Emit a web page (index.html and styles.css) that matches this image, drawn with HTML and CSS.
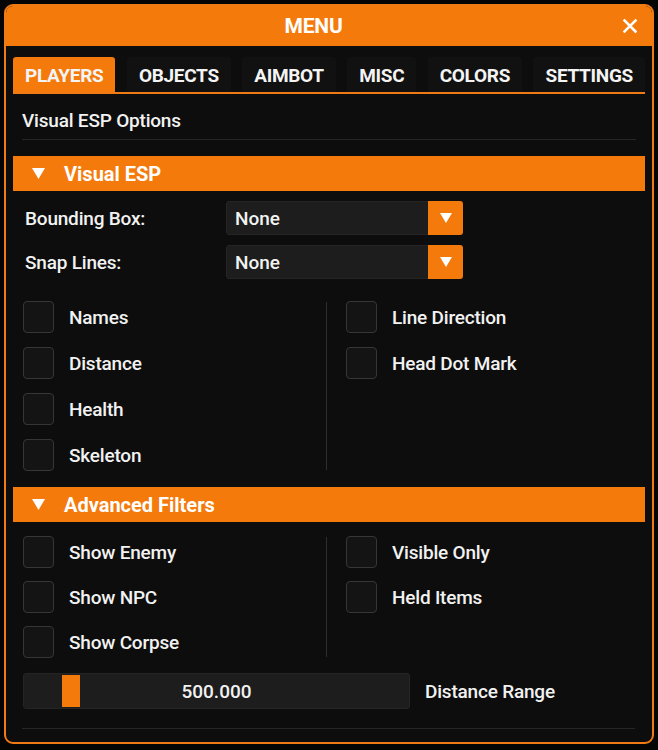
FILE: index.html
```html
<!DOCTYPE html>
<html>
<head>
<meta charset="utf-8">
<link rel="stylesheet" href="styles.css">
</head>
<body>
<div class="window">
  <div class="titlebar">
    <span class="title">MENU</span>
    <span class="close">
      <svg width="16" height="16" viewBox="0 0 16 16"><path d="M2.5 2.5 L13.5 13.5 M13.5 2.5 L2.5 13.5" stroke="#fff" stroke-width="2.5" stroke-linecap="square"/></svg>
    </span>
  </div>
  <div class="body">
    <div class="tabs">
      <div class="tab active">PLAYERS</div>
      <div class="tab">OBJECTS</div>
      <div class="tab">AIMBOT</div>
      <div class="tab">MISC</div>
      <div class="tab">COLORS</div>
      <div class="tab">SETTINGS</div>
    </div>
    <div class="subtitle">Visual ESP Options</div>

    <div class="header header-first">
      <svg class="tri" width="13" height="11" viewBox="0 0 13 11"><polygon points="0,0 13,0 6.5,11" fill="#fff"/></svg>
      <span>Visual ESP</span>
    </div>

    <div class="combo-row combo-first">
      <span class="combo-label">Bounding Box:</span>
      <div class="combo">
        <span class="combo-value">None</span>
        <span class="combo-arrow"><svg width="12" height="10" viewBox="0 0 12 10"><polygon points="0,0 12,0 6,10" fill="#fff"/></svg></span>
      </div>
    </div>
    <div class="combo-row">
      <span class="combo-label">Snap Lines:</span>
      <div class="combo">
        <span class="combo-value">None</span>
        <span class="combo-arrow"><svg width="12" height="10" viewBox="0 0 12 10"><polygon points="0,0 12,0 6,10" fill="#fff"/></svg></span>
      </div>
    </div>

    <div class="checks checks-esp">
      <div class="col col-left">
        <div class="check"><span class="box"></span><span>Names</span></div>
        <div class="check"><span class="box"></span><span>Distance</span></div>
        <div class="check"><span class="box"></span><span>Health</span></div>
        <div class="check"><span class="box"></span><span>Skeleton</span></div>
      </div>
      <div class="vdiv"></div>
      <div class="col col-right">
        <div class="check"><span class="box"></span><span>Line Direction</span></div>
        <div class="check"><span class="box"></span><span>Head Dot Mark</span></div>
      </div>
    </div>

    <div class="header header-second">
      <svg class="tri" width="13" height="11" viewBox="0 0 13 11"><polygon points="0,0 13,0 6.5,11" fill="#fff"/></svg>
      <span>Advanced Filters</span>
    </div>

    <div class="checks checks-adv">
      <div class="col col-left">
        <div class="check"><span class="box"></span><span>Show Enemy</span></div>
        <div class="check"><span class="box"></span><span>Show NPC</span></div>
        <div class="check"><span class="box"></span><span>Show Corpse</span></div>
      </div>
      <div class="vdiv"></div>
      <div class="col col-right">
        <div class="check"><span class="box"></span><span>Visible Only</span></div>
        <div class="check"><span class="box"></span><span>Held Items</span></div>
      </div>
    </div>

    <div class="slider-row">
      <div class="slider">
        <span class="grab"></span>
        <span class="slider-value">500.000</span>
      </div>
      <span class="slider-label">Distance Range</span>
    </div>

    <div class="bottom-sep"></div>
  </div>
</div>
</body>
</html>
```

FILE: styles.css
```css
html, body {
  margin: 0;
  padding: 0;
  background: #050505;
}

body {
  font-family: Roboto, "Liberation Sans", sans-serif;
  color: #f2f2f2;
  width: 658px;
  height: 750px;
  overflow: hidden;
}

.window {
  margin: 4px;
  width: 646px;
  height: 736px;
  border: 2px solid #f07a14;
  border-radius: 9px;
  background: #0d0d0d;
  overflow: hidden;
  box-sizing: content-box;
}

.titlebar {
  height: 40px;
  background: #f47a0c;
  display: flex;
  align-items: center;
}

.title {
  flex: 1;
  text-align: center;
  font-size: 21px;
  font-weight: 700;
  color: #fff;
  letter-spacing: -0.2px;
}

.close {
  width: 30px;
  padding-left: 1px;
  display: flex;
}

.body {
  padding: 11px 7px 0 7px;
}

.tabs {
  display: flex;
  justify-content: space-between;
  border-bottom: 2px solid #f07a14;
}

.tab {
  height: 35px;
  line-height: 37px;
  padding: 0 12px;
  font-size: 19px;
  font-weight: 700;
  color: #f4f4f4;
  background: #111111;
  border-radius: 3px 3px 0 0;
  letter-spacing: -0.3px;
}

.tab.active {
  background: #f47a0c;
}

.subtitle {
  margin: 0 9px;
  padding: 16px 0 7px 0;
  line-height: 22px;
  font-size: 19px;
  font-weight: 500;
  border-bottom: 1px solid #262626;
  letter-spacing: -0.2px;
}

.header {
  height: 35px;
  background: #f47a0c;
  display: flex;
  align-items: center;
  font-size: 20px;
  font-weight: 700;
  color: #fff;
}

.header .tri {
  margin-left: 19px;
  margin-right: 19px;
}

.header-first {
  margin-top: 16px;
}

.header-second {
  margin-top: 16px;
}

.combo-row {
  display: flex;
  align-items: center;
  height: 34px;
  margin-top: 10px;
  padding-left: 12px;
}

.combo-label {
  width: 201px;
  font-size: 19px;
  font-weight: 500;
  letter-spacing: -0.2px;
}

.combo {
  width: 237px;
  height: 34px;
  display: flex;
  background: #1d1d1d;
  border: 1px solid #252525;
  border-radius: 3px;
  box-sizing: border-box;
}

.combo-value {
  flex: 1;
  padding-left: 8px;
  line-height: 33px;
  font-size: 19px;
  font-weight: 500;
}

.combo-arrow {
  width: 35px;
  margin: -1px -1px -1px 0;
  background: #f47a0c;
  border-radius: 0 3px 3px 0;
  display: flex;
  align-items: center;
  justify-content: center;
}

.checks {
  display: flex;
  padding-left: 10px;
}

.checks-esp {
  margin-top: 22px;
}

.checks-adv {
  margin-top: 14px;
}

.col {
  display: flex;
  flex-direction: column;
}

.col-left {
  width: 303px;
}

.col-right {
  margin-left: 19px;
}

.checks-esp .col {
  gap: 14px;
}

.checks-adv .col {
  gap: 13px;
}

.vdiv {
  width: 1px;
  background: #2e2e2e;
  margin: 1px 0;
}

.check {
  display: flex;
  align-items: center;
  height: 32px;
  font-size: 19px;
  font-weight: 500;
  letter-spacing: -0.2px;
}

.box {
  width: 31px;
  height: 32px;
  box-sizing: border-box;
  border: 1.5px solid #363636;
  border-radius: 4px;
  background: #141414;
  margin-right: 15px;
}

.slider-row {
  display: flex;
  align-items: center;
  margin-top: 15px;
  padding-left: 10px;
}

.slider {
  position: relative;
  width: 387px;
  height: 36px;
  background: #1d1d1d;
  border: 1px solid #252525;
  border-radius: 3px;
  box-sizing: border-box;
  display: flex;
  align-items: center;
  justify-content: center;
}

.grab {
  position: absolute;
  left: 38px;
  top: 1px;
  width: 18px;
  height: 32px;
  background: #f47a0c;
}

.slider-value {
  font-size: 19px;
  font-weight: 500;
}

.slider-label {
  margin-left: 15px;
  font-size: 19px;
  font-weight: 500;
  letter-spacing: -0.2px;
}

.bottom-sep {
  margin: 19px 10px 0 9px;
  height: 1px;
  background: #262626;
}
```
